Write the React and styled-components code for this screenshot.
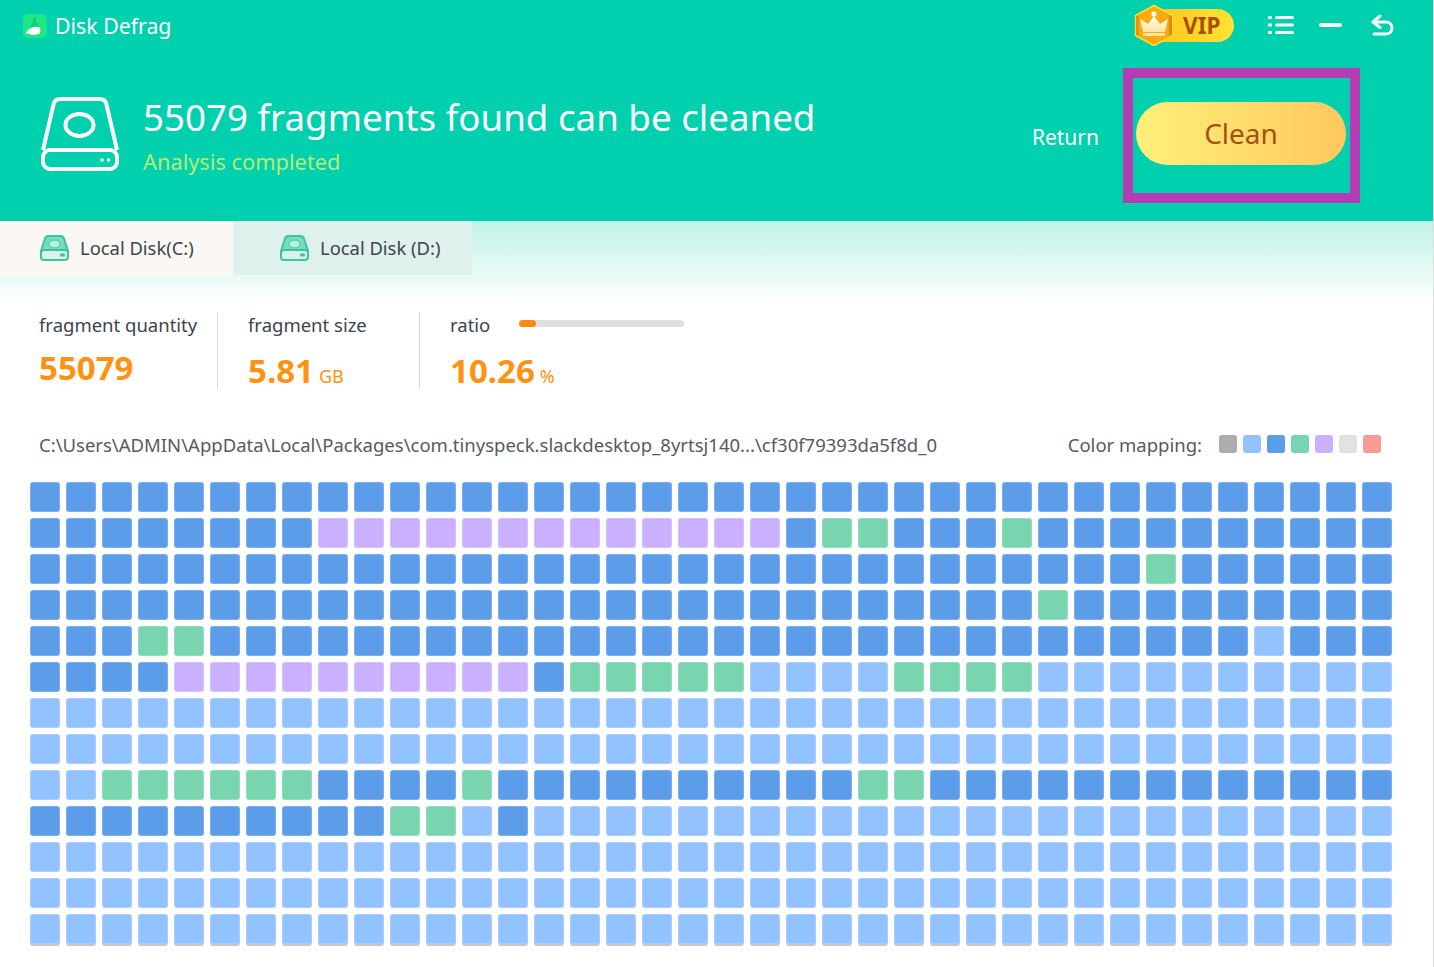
import React from "react";
import styled, { createGlobalStyle } from "styled-components";

const Global = createGlobalStyle`
  html, body { margin: 0; padding: 0; background: #fff; }
  * { box-sizing: border-box; }
  body { font-family: "Noto Sans", "Open Sans", sans-serif; }
`;

const Page = styled.div`
  width: 1434px;
  height: 967px;
  overflow: hidden;
  background: #fff;
  border-right: 1px solid #dcdcdc;
`;
const Header = styled.header`
  height: 221px;
  background: #00d0ae;
`;
const TitleBar = styled.div`
  height: 68px;
  display: flex;
  align-items: flex-start;
  padding: 4px 39px 0 23px;
`;
const Brand = styled.div`
  display: flex;
  align-items: center;
  gap: 8px;
  height: 44px;
  color: #fff;
  font-size: 21.3px;
`;
const BrandName = styled.span`
  margin-top: -2px;
`;
const TitleActions = styled.div`
  margin-left: auto;
  display: flex;
  align-items: center;
  height: 42px;
`;
const VipBadge = styled.div`
  display: flex;
  align-items: center;
  margin-right: 34px;
`;
const VipHex = styled.svg`
  position: relative;
  z-index: 1;
  display: block;
  margin-right: -26px;
`;
const VipPill = styled.div`
  width: 86px;
  height: 33px;
  padding-left: 35px;
  border-radius: 17px;
  background: linear-gradient(90deg, #ffc31c, #ffe334);
  color: #a8500a;
  font-size: 22.5px;
  font-weight: 700;
  line-height: 33px;
`;
const WinButton = styled.svg`
  display: block;
  margin-left: ${(p) => p.$gap}px;
`;
const Hero = styled.div`
  display: flex;
  align-items: flex-start;
  padding: 0 73px 0 40px;
`;
const HeroIcon = styled.svg`
  display: block;
  margin-top: 28px;
`;
const HeroText = styled.div`
  margin-left: 23px;
  margin-top: 20px;
`;
const HeroTitle = styled.h1`
  margin: 0;
  font-size: 36.7px;
  font-weight: 400;
  line-height: 59px;
  color: #fff;
`;
const HeroSub = styled.div`
  font-size: 21.8px;
  line-height: 30px;
  color: #b6ed76;
`;
const HeroActions = styled.div`
  margin-left: auto;
  display: flex;
  align-items: center;
  height: 135px;
`;
const ReturnLink = styled.span`
  padding-top: 2px;
  color: #fff;
  font-size: 21px;
  margin-right: 24px;
`;
const HighlightBox = styled.div`
  width: 237px;
  height: 135px;
  border: 10px solid #b43cb4;
  padding: 24px 4px 0 3px;
`;
const CleanButton = styled.button`
  display: block;
  width: 210px;
  height: 63px;
  padding: 0 0 2px;
  border: 0;
  border-radius: 32px;
  background: linear-gradient(90deg, #fff07a, #ffc85f);
  color: #a8510e;
  font-family: inherit;
  font-size: 28px;
`;
const TabArea = styled.div`
  height: 84px;
  background: linear-gradient(180deg, #bff2e6 0%, #e6f9f5 60%, #fff 100%);
`;
const Tabs = styled.div`
  display: flex;
  height: 54px;
`;
const Tab = styled.div`
  width: ${(p) => p.$width}px;
  display: flex;
  align-items: center;
  gap: 11px;
  padding-left: ${(p) => p.$pad}px;
  background: ${(p) => (p.$active ? "#fbf8f3" : "#dff1ec")};
  color: #3d4450;
  font-size: 18.4px;
`;
const TabLabel = styled.span`
  margin-top: -2px;
`;
const Stats = styled.section`
  display: flex;
  align-items: stretch;
  height: 77px;
  margin-top: 7px;
  padding-left: 39px;
`;
const Stat = styled.div`
  width: ${(p) => p.$width}px;
  padding-left: ${(p) => p.$pad}px;
  border-right: ${(p) => (p.$divider ? "1px solid #d9d9d9" : "0")};
`;
const StatHead = styled.div`
  display: flex;
  align-items: center;
  height: 24px;
  color: #3d4450;
  font-size: 18.5px;
`;
const StatValue = styled.div`
  margin-top: ${(p) => p.$top}px;
  color: #ff9212;
  font-size: 33px;
  font-weight: 700;
  line-height: 34px;
  white-space: nowrap;
`;
const StatUnit = styled.span`
  margin-left: 5px;
  font-size: 18px;
  font-weight: 400;
`;
const Progress = styled.div`
  width: 165px;
  height: 7px;
  margin-left: 29px;
  position: relative;
  top: -1px;
  border-radius: 4px;
  background: #e0e0e0;
`;
const ProgressFill = styled.div`
  height: 100%;
  border-radius: 4px;
  background: #ff8a10;
`;
const PathRow = styled.div`
  display: flex;
  align-items: center;
  height: 30px;
  margin-top: 40px;
  padding: 0 52px 0 39px;
  color: #555b63;
  font-size: 18.5px;
`;
const PathText = styled.span`
  white-space: nowrap;
`;
const Legend = styled.div`
  margin-left: auto;
  display: flex;
  align-items: center;
`;
const LegendLabel = styled.span`
  margin-right: 17px;
`;
const Swatch = styled.span`
  width: 18px;
  height: 18px;
  margin-right: 6px;
  border-radius: 3px;
  background: ${(p) => p.$color};
  &:last-child { margin-right: 0; }
`;
const Blocks = styled.div`
  display: grid;
  grid-template-columns: repeat(38, 30px);
  grid-auto-rows: 30px;
  gap: 6px;
  margin-top: 23px;
  padding-left: 30px;
`;
const Block = styled.div`
  border-radius: 3px;
  background: ${(p) => p.$color};
  border: 1px solid rgba(255, 255, 255, 0.2);
  box-shadow: ${(p) => (p.$last ? "0 2px 0 #c6c8cc" : "none")};
`;

const C = { d: "#5b9de8", l: "#92c2ff", g: "#78d5af", p: "#cbb0ff" };
const legend = ["#adadad", "#92c2ff", "#5b9de8", "#78d5af", "#cbb0ff", "#e2e2e2", "#f79a9a"];

// Runs per row: [type, count]
const rows = [
  [["d", 38]],
  [["d", 8], ["p", 13], ["d", 1], ["g", 2], ["d", 3], ["g", 1], ["d", 10]],
  [["d", 31], ["g", 1], ["d", 6]],
  [["d", 28], ["g", 1], ["d", 9]],
  [["d", 3], ["g", 2], ["d", 29], ["l", 1], ["d", 3]],
  [["d", 4], ["p", 10], ["d", 1], ["g", 5], ["l", 4], ["g", 4], ["l", 10]],
  [["l", 38]],
  [["l", 38]],
  [["l", 2], ["g", 6], ["d", 4], ["g", 1], ["d", 10], ["g", 2], ["d", 13]],
  [["d", 10], ["g", 2], ["l", 1], ["d", 1], ["l", 24]],
  [["l", 38]],
  [["l", 38]],
  [["l", 38]],
];
const cells = rows.flatMap((runs, r) =>
  runs.flatMap(([t, n]) => Array.from({ length: n }, () => ({ color: C[t], last: r === rows.length - 1 })))
);

const Logo = () => (
  <svg width="24" height="24" viewBox="0 0 24 24" style={{ display: "block" }}>
    <rect width="24" height="24" rx="5" fill="#1ee884" />
    <path d="M10 3h3v5c2 1 3 3 3 5H8c0-2 1-4 2-5z" fill="#11cf78" />
    <path d="M3 19c1-3 4-5 8-6 2-.5 5-.5 6 1 1 2 0 5-1 6-3 1-8 1-10 0-1 0-3 0-3-1z" fill="#fff" />
  </svg>
);

const BigDisk = () => (
  <HeroIcon width="80" height="76" viewBox="0 0 80 76" fill="none" stroke="#fff" strokeWidth="4">
    <path d="M3 54 13.500 8.500C14.300 4.800 16.500 3 20 3h40c3.500 0 5.700 1.800 6.500 5.500L77 54" />
    <rect x="3" y="54" width="74" height="19" rx="7" />
    <ellipse cx="39.500" cy="29" rx="14" ry="11" />
    <circle cx="62" cy="64" r="1.800" fill="#fff" stroke="none" />
    <circle cx="68.500" cy="64" r="1.800" fill="#fff" stroke="none" />
  </HeroIcon>
);

const TabDisk = () => (
  <svg width="29" height="26" viewBox="0 0 29 26" style={{ display: "block" }}>
    <path d="M1 16 5 3.500C5.600 1.800 6.800 1 8.500 1h12c1.700 0 2.900.8 3.500 2.500L28 16z" fill="#74dcc0" stroke="#3fc4a0" strokeWidth="2" />
    <ellipse cx="14.500" cy="9" rx="5.500" ry="4" fill="#b8efdf" stroke="#5dd0b2" strokeWidth="1.500" />
    <rect x="1" y="15" width="27" height="10" rx="3" fill="#d7f3ea" stroke="#3fc4a0" strokeWidth="2" />
    <rect x="20" y="18.500" width="5" height="3" rx="1" fill="#3fc4a0" />
  </svg>
);

const Hexagon = () => (
  <VipHex width="40" height="43" viewBox="0 0 40 43">
    <defs>
      <linearGradient id="hexFill" x1="0" y1="0" x2="1" y2="0">
        <stop offset="0" stopColor="#c9730a" />
        <stop offset="0.12" stopColor="#ffa90a" />
        <stop offset="0.88" stopColor="#ffa90a" />
        <stop offset="1" stopColor="#b9650a" />
      </linearGradient>
      <linearGradient id="crownFill" x1="0" y1="0" x2="0" y2="1">
        <stop offset="0" stopColor="#fff" />
        <stop offset="1" stopColor="#ffe39a" />
      </linearGradient>
    </defs>
    <path d="M20 1.500 38.500 11.500V31.500L20 41.500 1.500 31.500V11.500Z" fill="url(#hexFill)" stroke="#ffdc2e" strokeWidth="1.500" strokeLinejoin="round" />
    <circle cx="20" cy="10" r="2.600" fill="#fff" />
    <path d="M20 12 26 20 34 15 31 28H9L6 15 14 20Z" fill="url(#crownFill)" />
    <rect x="9" y="29" width="22" height="3" rx="1" fill="#ffe9b0" />
  </VipHex>
);

const ListIcon = () => (
  <WinButton $gap={0} width="26" height="20" viewBox="0 0 26 20" fill="#fff">
    <rect x="0" y="1" width="4" height="3" rx="1" />
    <rect x="0" y="8.500" width="4" height="3" rx="1" />
    <rect x="0" y="16" width="4" height="3" rx="1" />
    <rect x="7" y="1" width="19" height="3" rx="1.500" />
    <rect x="7" y="8.500" width="19" height="3" rx="1.500" />
    <rect x="7" y="16" width="19" height="3" rx="1.500" />
  </WinButton>
);
const MinusIcon = () => (
  <WinButton $gap={25} width="23" height="4" viewBox="0 0 23 4" fill="#fff">
    <rect width="23" height="4" rx="2" />
  </WinButton>
);
const BackIcon = () => (
  <WinButton $gap={29} width="23" height="22" viewBox="0 0 23 22" fill="none" stroke="#fff" strokeWidth="3" strokeLinecap="round" strokeLinejoin="round">
    <path d="M9 2 2 8l7 5.500" />
    <path d="M2.500 8H15c3.500 0 6 2.500 6 6s-2.500 6-6 6H3" />
  </WinButton>
);

export default function App() {
  return (
    <Page>
      <Global />
      <Header>
        <TitleBar>
          <Brand>
            <Logo />
            <BrandName>Disk Defrag</BrandName>
          </Brand>
          <TitleActions>
            <VipBadge>
              <Hexagon />
              <VipPill>VIP</VipPill>
            </VipBadge>
            <ListIcon />
            <MinusIcon />
            <BackIcon />
          </TitleActions>
        </TitleBar>
        <Hero>
          <BigDisk />
          <HeroText>
            <HeroTitle>55079 fragments found can be cleaned</HeroTitle>
            <HeroSub>Analysis completed</HeroSub>
          </HeroText>
          <HeroActions>
            <ReturnLink>Return</ReturnLink>
            <HighlightBox>
              <CleanButton>Clean</CleanButton>
            </HighlightBox>
          </HeroActions>
        </Hero>
      </Header>
      <TabArea>
        <Tabs>
          <Tab $active $width={233} $pad={40}>
            <TabDisk />
            <TabLabel>Local Disk(C:)</TabLabel>
          </Tab>
          <Tab $width={239} $pad={47}>
            <TabDisk />
            <TabLabel>Local Disk (D:)</TabLabel>
          </Tab>
        </Tabs>
      </TabArea>
      <Stats>
        <Stat $width={179} $pad={0} $divider>
          <StatHead>fragment quantity</StatHead>
          <StatValue $top={15}>55079</StatValue>
        </Stat>
        <Stat $width={202} $pad={30} $divider>
          <StatHead>fragment size</StatHead>
          <StatValue $top={18}>
            5.81<StatUnit>GB</StatUnit>
          </StatValue>
        </Stat>
        <Stat $width={300} $pad={30}>
          <StatHead>
            ratio
            <Progress>
              <ProgressFill style={{ width: "10.26%" }} />
            </Progress>
          </StatHead>
          <StatValue $top={18}>
            10.26<StatUnit>%</StatUnit>
          </StatValue>
        </Stat>
      </Stats>
      <PathRow>
        <PathText>C:\Users\ADMIN\AppData\Local\Packages\com.tinyspeck.slackdesktop_8yrtsj140...\cf30f79393da5f8d_0</PathText>
        <Legend>
          <LegendLabel>Color mapping:</LegendLabel>
          {legend.map((c) => (
            <Swatch key={c} $color={c} />
          ))}
        </Legend>
      </PathRow>
      <Blocks>
        {cells.map((c, i) => (
          <Block key={i} $color={c.color} $last={c.last} />
        ))}
      </Blocks>
    </Page>
  );
}
